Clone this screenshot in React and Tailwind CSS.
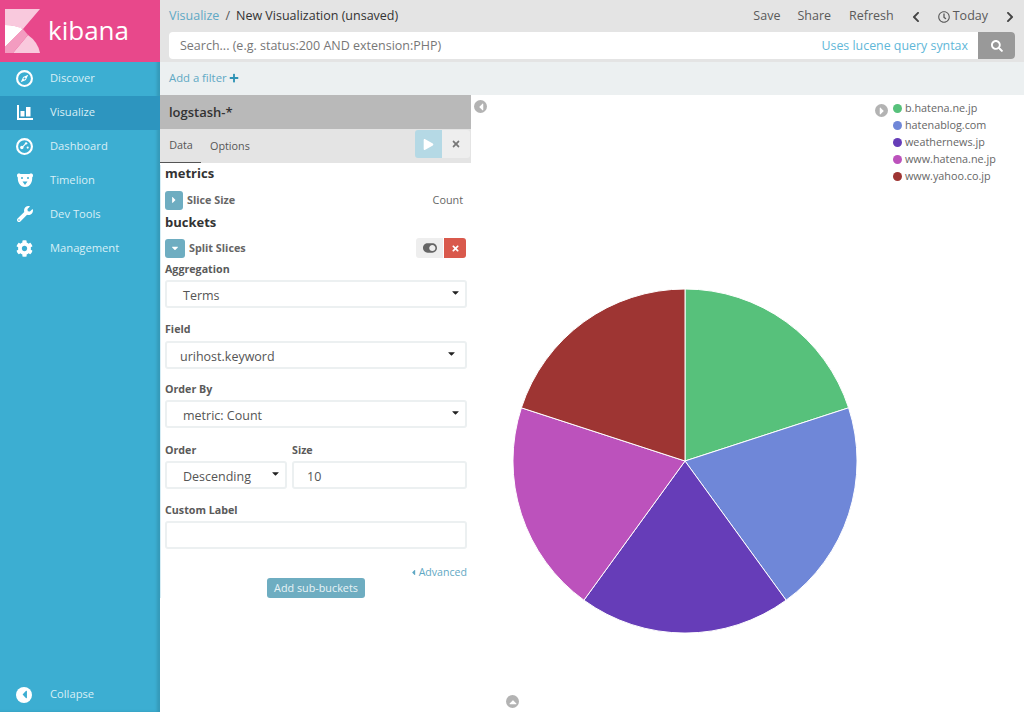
import React from 'react';
import {
  FaWrench, FaCog, FaRegClock, FaSearch, FaPlus, FaTimes, FaPlay,
  FaCaretRight, FaCaretDown, FaCaretLeft, FaCaretUp, FaChevronLeft, FaChevronRight, FaToggleOn,
} from 'react-icons/fa';

const FONT = { fontFamily: '"Open Sans", sans-serif' };

function CompassIcon() {
  return (
    <svg viewBox="0 0 16 16" className="h-[17px] w-[17px]">
      <circle cx="8" cy="8" r="7" fill="none" stroke="#fff" strokeWidth="2" />
      <path d="M11.500 4.500L9.300 9.300L4.500 11.500L6.700 6.700z" fill="#fff" />
      <circle cx="8" cy="8" r="1" fill="#3caed2" />
    </svg>
  );
}

function BarIcon() {
  return (
    <svg viewBox="0 0 16 15" className="h-[15px] w-[16px]" fill="#fff">
      <path d="M0 0h2v13h14v2H0z" />
      <path d="M3.500 6h4v5.500h-4zM9 2h4.500v9.500H9z" />
    </svg>
  );
}

function DashIcon() {
  return (
    <svg viewBox="0 0 16 16" className="h-[17px] w-[17px]">
      <circle cx="8" cy="8" r="7" fill="none" stroke="#fff" strokeWidth="2" />
      <circle cx="5.500" cy="9" r="1.600" fill="#fff" />
      <circle cx="9.500" cy="5" r="1.100" fill="#fff" />
      <circle cx="11" cy="9" r="1" fill="#fff" />
      <path d="M6 8.500L9 5.500" stroke="#fff" strokeWidth="1" />
    </svg>
  );
}

function BearIcon() {
  return (
    <svg viewBox="0 0 16 14" className="h-[14px] w-[16px]">
      <path d="M0 2.500C0 .5 2 0 3.500 1h9C14 0 16 .5 16 2.500c0 1-.4 1.500-.8 2C15.500 9 13 14 8 14S.5 9 .8 4.500C.4 4 0 3.500 0 2.500z" fill="#fff" />
      <circle cx="5" cy="5" r="1" fill="#3caed2" />
      <circle cx="11" cy="5" r="1" fill="#3caed2" />
      <path d="M5.500 8.500h5L8 12z" fill="#3caed2" />
    </svg>
  );
}

const navItems = [
  { label: 'Discover', icon: <CompassIcon /> },
  { label: 'Visualize', icon: <BarIcon />, active: true },
  { label: 'Dashboard', icon: <DashIcon /> },
  { label: 'Timelion', icon: <BearIcon /> },
  { label: 'Dev Tools', icon: <FaWrench size={16} color="#fff" /> },
  { label: 'Management', icon: <FaCog size={17} color="#fff" /> },
];

function NavRow({ item }) {
  return (
    <div className={`flex h-[34px] items-center pb-[2px] pl-[16px] text-[11.2px] text-[#d8eff6] ${item.active ? 'bg-[#2d95bf]' : ''}`}>
      <span className="flex w-[17px] justify-center">{item.icon}</span>
      <span className="ml-[17px]">{item.label}</span>
    </div>
  );
}

function Sidebar() {
  return (
    <aside className="flex h-full w-[160px] shrink-0 flex-col bg-[#3caed2] shadow-[inset_-3px_0_3px_rgba(0,0,0,0.12)]">
      <div className="flex h-[62px] items-center bg-[#e8488b] pl-[5px]">
        <svg viewBox="0 0 35 44" className="h-[44px] w-[35px]">
          <path d="M0 0h35L18 20Q9 16 0 16z" fill="#f9c9dd" />
          <path d="M0 16Q10 16 18 20L0 38z" fill="#fff" />
          <path d="M8 44L23 26Q33 33 35 44z" fill="#f9c9dd" />
          <path d="M0 44V38L18 20L23 26L8 44z" fill="#f39cc0" />
        </svg>
        <span className="mb-[2px] ml-[8px] text-[26px] font-medium leading-none text-white">kibana</span>
      </div>
      {navItems.map((item) => <NavRow key={item.label} item={item} />)}
      <div className="mt-auto flex h-[34px] items-center pb-[1px] pl-[16px] text-[11.2px] text-[#d8eff6]">
        <span className="flex h-[16px] w-[16px] items-center justify-center rounded-full bg-white">
          <FaCaretLeft size={13} color="#3caed2" />
        </span>
        <span className="ml-[18px]">Collapse</span>
      </div>
    </aside>
  );
}

function TopBar() {
  return (
    <div className="h-[62px] bg-[#e4e4e4] pl-[9px] pr-[8px]">
      <div className="flex h-[32px] items-center pt-[1px] text-[12.5px]">
        <span className="text-[#5fa8c4]">Visualize</span>
        <span className="ml-[6px] text-[#555]">/</span>
        <span className="ml-[6px] text-[#333]">New Visualization (unsaved)</span>
        <div className="ml-auto flex items-center text-[#5a5a5a]">
          <span>Save</span>
          <span className="ml-[17px]">Share</span>
          <span className="ml-[18px]">Refresh</span>
          <FaChevronLeft size={12} className="ml-[16px]" color="#444" />
          <FaRegClock size={12} className="ml-[16px]" />
          <span className="ml-[3px]">Today</span>
          <FaChevronRight size={12} className="ml-[16px]" color="#444" />
        </div>
      </div>
      <div className="flex h-[27px] w-[846px] overflow-hidden rounded-[4px] bg-white">
        <span className="flex flex-1 items-center pl-[11px] pt-[2px] text-[12.5px] text-[#777]">
          Search... (e.g. status:200 AND extension:PHP)
        </span>
        <span className="flex items-center pr-[10px] pt-[2px] text-[12.4px] text-[#5fb7d8]">Uses lucene query syntax</span>
        <span className="flex w-[37px] items-center justify-center bg-[#999]">
          <FaSearch size={12} color="#fff" />
        </span>
      </div>
    </div>
  );
}

function FieldLabel({ children, className = '' }) {
  return <div className={`text-[10.7px] font-bold leading-[16px] text-[#5a5a5a] ${className}`}>{children}</div>;
}

function SelectBox({ value, className = '', pad = 'pl-[16px]', caret = 'pr-[4px]' }) {
  return (
    <div className={`flex h-[28px] items-center justify-between rounded-[3px] border-2 border-[#ecf0f1] bg-white text-[12.5px] text-[#555] ${pad} ${caret} ${className}`}>
      <span className="pt-[5px]">{value}</span>
      <FaCaretDown size={11} color="#222" className="mb-[3px]" />
    </div>
  );
}

function Editor() {
  return (
    <div className="w-[311px] shrink-0">
      <div className="flex h-[34px] items-center bg-[#b9b9b9] pl-[9px] pt-[2px] text-[13px] font-semibold text-[#333]">logstash-*</div>
      <div className="flex h-[34px] items-stretch bg-[#e4e4e4] text-[10.8px] text-[#555]">
        <span className="flex w-[41px] items-center justify-center border-b border-[#555] pl-[1px]">Data</span>
        <span className="ml-[9px] flex items-center">Options</span>
        <div className="mb-[5px] ml-auto mr-[1px] mt-[1px] flex overflow-hidden rounded-[3px]">
          <span className="flex w-[27px] items-center justify-center bg-[#b5d9e5]"><FaPlay size={11} color="#fff" /></span>
          <span className="flex w-[28px] items-center justify-center bg-[#eeeeee]"><FaTimes size={10} color="#777" /></span>
        </div>
      </div>
      <div className="border-l border-[#d7edf5] pl-[4px] pr-[4px]">
        <div className="mt-[2px] text-[13px] font-bold leading-[17px] text-[#333]">metrics</div>
        <div className="mt-[8px] flex h-[20px] items-center">
          <span className="flex h-[19px] w-[18px] items-center justify-center rounded-[3px] bg-[#6eadc1]"><FaCaretRight size={10} color="#fff" /></span>
          <span className="ml-[4px] text-[10.8px] font-bold text-[#666]">Slice Size</span>
          <span className="ml-auto mr-[4px] text-[10.8px] text-[#666]">Count</span>
        </div>
        <div className="mt-[4px] text-[13px] font-bold leading-[17px] text-[#333]">buckets</div>
        <div className="mt-[7px] flex h-[20px] items-center">
          <span className="flex h-[19px] w-[20px] items-center justify-center rounded-[3px] bg-[#6eadc1]"><FaCaretDown size={10} color="#fff" /></span>
          <span className="ml-[4px] text-[10.8px] font-bold text-[#666]">Split Slices</span>
          <div className="ml-auto mr-[1px] flex h-[20px] overflow-hidden rounded-[3px]">
            <span className="flex w-[27px] items-center justify-center bg-[#eeeeee]"><FaToggleOn size={14} color="#666" /></span>
            <span className="ml-[1px] flex w-[22px] items-center justify-center bg-[#d9594c]"><FaTimes size={9} color="#fff" /></span>
          </div>
        </div>
        <FieldLabel className="mt-[3px]">Aggregation</FieldLabel>
        <SelectBox value="Terms" className="mt-[3px] w-[302px]" />
        <FieldLabel className="mt-[13px]">Field</FieldLabel>
        <SelectBox value="urihost.keyword" className="mt-[4px] w-[302px]" pad="pl-[13px]" caret="pr-[8px]" />
        <FieldLabel className="mt-[12px]">Order By</FieldLabel>
        <SelectBox value="metric: Count" className="mt-[3px] w-[302px]" />
        <div className="mt-[14px] flex w-[302px] gap-[5px]">
          <div className="w-[122px]">
            <FieldLabel>Order</FieldLabel>
            <SelectBox value="Descending" className="mt-[3px]" />
          </div>
          <div className="flex-1">
            <FieldLabel>Size</FieldLabel>
            <div className="mt-[3px] flex h-[28px] items-center rounded-[3px] border-2 border-[#ecf0f1] bg-white pl-[13px] pt-[4px] text-[12.5px] text-[#555]">10</div>
          </div>
        </div>
        <FieldLabel className="mt-[13px]">Custom Label</FieldLabel>
        <div className="mt-[3px] h-[28px] w-[302px] rounded-[3px] border-2 border-[#ecf0f1] bg-white" />
        <div className="mt-[17px] flex w-[302px] items-center justify-end text-[10.6px] leading-[12px] text-[#5fa8c4]">
          <FaCaretLeft size={9} />
          <span className="ml-[1px]">Advanced</span>
        </div>
        <div className="flex w-[302px] justify-center">
          <span className="flex h-[20px] w-[98px] items-center justify-center rounded-[3px] bg-[#6eadc1] text-[10.8px] text-[#e8f3f6]">Add sub-buckets</span>
        </div>
      </div>
    </div>
  );
}

const legend = [
  { label: 'b.hatena.ne.jp', color: '#57c17b' },
  { label: 'hatenablog.com', color: '#6f87d8' },
  { label: 'weathernews.jp', color: '#663db8' },
  { label: 'www.hatena.ne.jp', color: '#bc52bc' },
  { label: 'www.yahoo.co.jp', color: '#9e3533' },
];

const slices = [
  { d: 'M172 172L172 0A172 172 0 0 1 335.600 118.800Z', color: '#57c17b' },
  { d: 'M172 172L335.600 118.800A172 172 0 0 1 273.100 311.200Z', color: '#6f87d8' },
  { d: 'M172 172L273.100 311.200A172 172 0 0 1 70.900 311.200Z', color: '#663db8' },
  { d: 'M172 172L70.900 311.200A172 172 0 0 1 8.400 118.800Z', color: '#bc52bc' },
  { d: 'M172 172L8.400 118.800A172 172 0 0 1 172 0Z', color: '#9e3533' },
];

function RoundArrow({ children, className }) {
  return (
    <span className={`absolute flex h-[13px] w-[13px] items-center justify-center rounded-full bg-[#b3b3b3] ${className}`}>
      {children}
    </span>
  );
}

function Chart() {
  return (
    <div className="relative flex flex-1 bg-white">
      <RoundArrow className="left-[3px] top-[5px]"><FaCaretLeft size={12} color="#fff" /></RoundArrow>
      <RoundArrow className="left-[35px] bottom-[4px]"><FaCaretUp size={12} color="#fff" /></RoundArrow>
      <div className="flex-1 pl-[42px] pt-[194px]">
        <svg viewBox="0 0 344 344" className="h-[344px] w-[344px]">
          {slices.map((s) => <path key={s.color} d={s.d} fill={s.color} stroke="#fff" strokeWidth="1" />)}
        </svg>
      </div>
      <div className="relative w-[150px] shrink-0 pl-[19px] pt-[5px]">
        <RoundArrow className="left-[1px] top-[9px]"><FaCaretRight size={12} color="#fff" /></RoundArrow>
        {legend.map((l) => (
          <div key={l.label} className="flex h-[17px] items-center text-[10.8px] text-[#666]">
            <span className="h-[9px] w-[9px] rounded-full" style={{ backgroundColor: l.color }} />
            <span className="ml-[3px]">{l.label}</span>
          </div>
        ))}
      </div>
    </div>
  );
}

export default function App() {
  return (
    <div className="flex h-[712px] w-[1024px] overflow-hidden bg-white" style={FONT}>
      <Sidebar />
      <main className="flex min-w-0 flex-1 flex-col">
        <TopBar />
        <div className="flex h-[33px] items-center bg-[#ecf0f1] pb-[1px] pl-[9px] text-[11.3px] text-[#5fa8c4]">
          Add a filter
          <FaPlus size={10} className="ml-[2px] text-[#2f93b5]" />
        </div>
        <div className="flex flex-1">
          <Editor />
          <Chart />
        </div>
      </main>
    </div>
  );
}
